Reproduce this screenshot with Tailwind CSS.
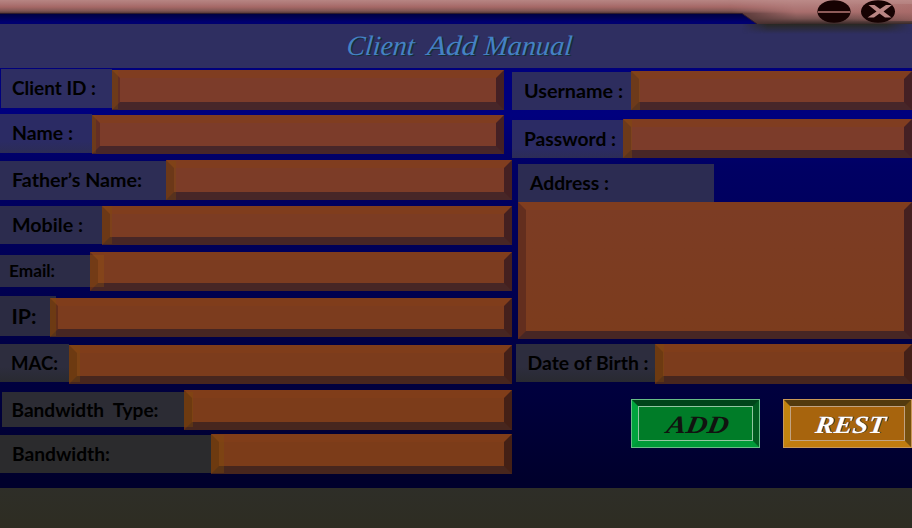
<!DOCTYPE html>
<html lang="en">
<head>
<meta charset="utf-8">
<title>Client Add Manual</title>
<script src="https://cdn.jsdelivr.net/npm/@tailwindcss/browser@4"></script>
</head>
<body class="w-[912px] h-[528px] overflow-hidden bg-[#000040] font-['Lato',sans-serif]">
<div class="flex flex-col w-[912px] h-[528px] bg-[linear-gradient(180deg,#00003c_13px,#000070_22px,#00007c_70px,#00007e_115px,#000064_165px,#00005a_240px,#000048_330px,#00003c_400px,#00002c_480px)]">
  <header class="relative h-[24px] shrink-0">
    <svg class="block" width="912" height="24" viewBox="0 0 912 24">
      <defs>
        <linearGradient id="bar" x1="0" y1="0" x2="0" y2="13.500" gradientUnits="userSpaceOnUse"><stop offset="0" stop-color="#b78583"/><stop offset=".3" stop-color="#ad7574"/><stop offset=".52" stop-color="#a56765"/><stop offset=".8" stop-color="#815654"/><stop offset="1" stop-color="#513434"/></linearGradient>
        <linearGradient id="tab" x1="0" y1="0" x2="0" y2="24" gradientUnits="userSpaceOnUse"><stop offset="0" stop-color="#bb8a88"/><stop offset=".5" stop-color="#a86e6d"/><stop offset=".78" stop-color="#795351"/><stop offset="1" stop-color="#382928"/></linearGradient>
        <linearGradient id="fade" x1="730" y1="8" x2="790" y2="-8" gradientUnits="userSpaceOnUse"><stop offset="0" stop-color="#fff" stop-opacity="0"/><stop offset="1" stop-color="#fff"/></linearGradient>
        <mask id="m"><rect x="700" y="0" width="212" height="24" fill="url(#fade)"/></mask>
        <linearGradient id="glow" x1="850" y1="0" x2="912" y2="0" gradientUnits="userSpaceOnUse"><stop offset="0" stop-color="#a86866" stop-opacity="0"/><stop offset="1" stop-color="#a86866" stop-opacity=".55"/></linearGradient>
      </defs>
      <path d="M0 0H912V24H757L742 13.500H0Z" fill="url(#bar)"/>
      <path d="M700 0H912V24H757L742 13.500H700Z" fill="url(#tab)" mask="url(#m)"/>
      <path d="M850 4H912V21H850Z" fill="url(#glow)"/>
      <path d="M0 13.500H742L757 24" fill="none" stroke="#301c2c"/>
      <ellipse cx="834" cy="11.500" rx="16.600" ry="11.300" fill="#160202"/>
      <path d="M818 12H850" stroke="#8e5b59" stroke-width="2"/>
      <ellipse cx="878" cy="11.500" rx="17" ry="11.300" fill="#160202"/>
      <path d="M868.500 5H874.500L880 9L886 5H892L883.500 11.400L891.500 17.500H885L879.500 13.600L874 17.500H867.500L876.500 11.400Z" fill="#b98583"/>
    </svg>
  </header>
  <div class="relative h-[44px] shrink-0 bg-[#2f2f61]">
    <div class="absolute left-[742px] right-0 top-0 h-[10px] bg-linear-to-b from-[#292822] to-[#2f2f61]/0 mask-l-from-85% mask-r-from-85%"></div>
    <svg class="relative block" width="912" height="44"><g font-family="Liberation Serif, serif" font-style="italic" font-size="28"><g fill="#172c35" transform="translate(1 .5)"><text transform="translate(346.500 31) skewX(-5)" textLength="68" lengthAdjust="spacingAndGlyphs">Client</text><text transform="translate(427 31) skewX(-5)" textLength="50" lengthAdjust="spacingAndGlyphs">Add</text><text transform="translate(484 31) skewX(-5)" textLength="88" lengthAdjust="spacingAndGlyphs">Manual</text></g><g fill="#4482c4"><text transform="translate(346 31) skewX(-5)" textLength="68" lengthAdjust="spacingAndGlyphs">Client</text><text transform="translate(426.500 31) skewX(-5)" textLength="50" lengthAdjust="spacingAndGlyphs">Add</text><text transform="translate(483.500 31) skewX(-5)" textLength="88" lengthAdjust="spacingAndGlyphs">Manual</text></g></g></svg>
  </div>
  <main class="flex h-[420px] shrink-0 items-start">
    <section class="w-[512px] pt-px font-bold text-[18.5px]">
      <div class="flex items-start pl-px pr-2">
        <div class="w-[111px] h-[39px] bg-[#2e2e62]"><svg class="block w-full h-full"><text x="11" y="26" textLength="84" lengthAdjust="spacingAndGlyphs">Client ID :</text></svg></div>
        <div class="relative mt-px grow h-[40px] border-8 border-t-[#803d20] border-r-[#442024] border-b-[#472629] border-l-[#632e24] bg-[#7c3c2a]"><i class="absolute -left-2 -top-2 w-[6px] h-[39px] bg-[#805008]/35"></i></div>
      </div>
      <div class="flex items-start mt-1 pr-2">
        <div class="w-[92px] h-[39px] bg-linear-to-b from-[#2b2b64] from-70% to-[#2c2c56]"><svg class="block w-full h-full"><text x="12" y="26" textLength="61" lengthAdjust="spacingAndGlyphs">Name :</text></svg></div>
        <div class="relative mt-px grow h-[39px] border-8 border-t-[#803d20] border-r-[#442024] border-b-[#472629] border-l-[#632e24] bg-[#7c3c2a]"><i class="absolute -left-2 -top-2 w-[4px] h-[38px] bg-[#805008]/35"></i></div>
      </div>
      <div class="flex items-start mt-1.5">
        <div class="mt-px w-[166px] h-[39px] bg-[#2d2d55]"><svg class="block w-full h-full"><text x="12" y="26" textLength="130" lengthAdjust="spacingAndGlyphs">Father’s Name:</text></svg></div>
        <div class="relative grow h-[40px] border-8 border-t-[#803d1f] border-r-[#442022] border-b-[#472627] border-l-[#632e20] bg-[#7c3c27]"><i class="absolute -left-2 -top-[7px] w-[10px] h-[39px] bg-[#805008]/30"></i></div>
      </div>
      <div class="flex items-start mt-1.5">
        <div class="w-[102px] h-[38px] bg-[#2c2c4e]"><svg class="block w-full h-full"><text x="12" y="26" textLength="71" lengthAdjust="spacingAndGlyphs">Mobile :</text></svg></div>
        <div class="relative grow h-[39px] border-8 border-t-[#803d1d] border-r-[#442020] border-b-[#472626] border-l-[#632e1e] bg-[#7c3c23]"><i class="absolute -left-2 -top-2 w-[10px] h-[38px] bg-[#805008]/30"></i></div>
      </div>
      <div class="flex items-start mt-[7px]">
        <div class="mt-[3px] w-[90px] h-[32px] bg-[#2c2c47]"><svg class="block w-full h-full"><text x="9" y="22" font-size="17" textLength="46" lengthAdjust="spacingAndGlyphs">Email:</text></svg></div>
        <div class="relative grow h-[39px] border-8 border-t-[#803d1c] border-r-[#44201f] border-b-[#472625] border-l-[#632e1a] bg-[#7c3c20]"><i class="absolute -left-2 -top-[5px] w-[14px] h-[32px] bg-[#985a0c]/30"></i></div>
      </div>
      <div class="flex items-start mt-[5px]">
        <div class="w-[50px] h-[40px] bg-[#2b2b42]"><svg class="block w-full h-full"><text x="11.500" y="28" font-size="21.500" textLength="25" lengthAdjust="spacingAndGlyphs">IP:</text></svg><i class="block -mt-10 ml-[50px] w-[6px] h-[2px] bg-[#2b2b42]"></i></div>
        <div class="relative mt-0.5 grow h-[39px] border-8 border-t-[#803d1b] border-r-[#44201c] border-b-[#472622] border-l-[#632e1a] bg-[#7c3c1e]"><i class="absolute -left-2 -top-2 w-[6px] h-[38px] bg-[#805008]/35"></i></div>
      </div>
      <div class="flex items-start mt-[7px]">
        <div class="w-[69px] h-[38px] bg-linear-to-b from-[#2d2d3e] from-60% to-[#292a31]"><svg class="block w-full h-full"><text x="11" y="26" textLength="47" lengthAdjust="spacingAndGlyphs">MAC:</text></svg></div>
        <div class="relative mt-px grow h-[39px] border-8 border-t-[#803d1a] border-r-[#442018] border-b-[#47261e] border-l-[#632e16] bg-[#7c3c1c]"><i class="absolute -left-2 -top-2 w-[11px] h-[37px] bg-[#805008]/35"></i></div>
      </div>
      <div class="flex items-start mt-1.5 pl-0.5">
        <div class="mt-0.5 w-[182px] h-[35px] bg-[#2c2c34]"><svg class="block w-full h-full"><text x="9.500" y="25" textLength="147" lengthAdjust="spacingAndGlyphs" xml:space="preserve">Bandwidth  Type:</text></svg></div>
        <div class="relative grow h-[40px] border-8 border-t-[#803d19] border-r-[#442016] border-b-[#47261e] border-l-[#632e14] bg-[#7c3c1a]"><i class="absolute -left-2 -top-[6px] w-[9px] h-[35px] bg-[#805008]/35"></i></div>
      </div>
      <div class="flex items-start mt-1">
        <div class="mt-px w-[211px] h-[38px] bg-[#2b2b2d]"><svg class="block w-full h-full"><text x="12" y="26" textLength="98" lengthAdjust="spacingAndGlyphs">Bandwidth:</text></svg></div>
        <div class="relative grow h-[40px] border-8 border-t-[#803d19] border-r-[#442015] border-b-[#47261d] border-l-[#632e14] bg-[#7c3c19]"><i class="absolute -left-2 -top-[7px] w-[13px] h-[38px] bg-[#805008]/35"></i></div>
      </div>
    </section>
    <section class="w-[400px] pt-[3px] font-bold text-[18.5px]">
      <div class="flex items-start">
        <div class="mt-px w-[119px] h-[38px] bg-[#2d2d5e]"><svg class="block w-full h-full"><text x="12" y="26" textLength="99" lengthAdjust="spacingAndGlyphs">Username :</text></svg></div>
        <div class="relative grow h-[39px] border-8 border-t-[#803d20] border-r-[#442024] border-b-[#472629] border-l-[#632e24] bg-[#7c3c29]"><i class="absolute -left-2 -top-[7px] w-[9px] h-[38px] bg-[#805008]/35"></i></div>
      </div>
      <div class="flex items-start mt-[9px]">
        <div class="mt-px w-[111px] h-[38px] bg-linear-to-b from-[#2b2b64] from-75% to-[#2c2c56]"><svg class="block w-full h-full"><text x="12" y="26" textLength="92" lengthAdjust="spacingAndGlyphs">Password :</text></svg></div>
        <div class="relative grow h-[39px] border-8 border-t-[#803d20] border-r-[#442024] border-b-[#472627] border-l-[#632e24] bg-[#7c3c2a]"><i class="absolute -left-2 -top-[7px] w-[9px] h-[38px] bg-[#805008]/35"></i></div>
      </div>
      <div class="mt-1.5 ml-1.5">
        <div class="w-[196px] h-[38px] bg-[#2c2c52]"><svg class="block w-full h-full"><text x="12" y="26" textLength="79" lengthAdjust="spacingAndGlyphs">Address :</text></svg></div>
        <div class="h-[137px] border-8 border-t-[#803d1e] border-r-[#442020] border-b-[#472624] border-l-[#632e1e] bg-linear-to-b from-[#7c3c24] to-[#7c3c1d]"></div>
      </div>
      <div class="flex items-start mt-[5px] ml-1">
        <div class="w-[139px] h-[38px] bg-linear-to-b from-[#2d2d3e] from-60% to-[#292a31]"><svg class="block w-full h-full"><text x="11.500" y="26" textLength="121" lengthAdjust="spacingAndGlyphs">Date of Birth :</text></svg></div>
        <div class="relative grow h-[40px] border-8 border-t-[#803d1a] border-r-[#442018] border-b-[#47261e] border-l-[#632e16] bg-[#7c3c1c]"><i class="absolute -left-2 -top-2 w-[9px] h-[38px] bg-[#805008]/35"></i></div>
      </div>
      <div class="flex mt-[15px] ml-[119px] gap-[23px]">
        <button class="w-[129px] h-[49px] border border-[#67bd86] bg-[#007c28]">
          <span class="block h-full border-[6px] border-t-[#00451a] border-r-[#005c20] border-b-[#009a38] border-l-[#00a43d]">
            <span class="block h-full border border-[#91c7a1]"><svg class="block w-full h-full"><text transform="translate(26.500 26) skewX(-10)" font-family="Liberation Serif, serif" font-style="italic" font-weight="bold" font-size="25" textLength="62" lengthAdjust="spacingAndGlyphs" fill="#10130f">ADD</text></svg></span>
          </span>
        </button>
        <button class="w-[129px] h-[49px] border border-[#c99856] bg-[#a7640d]">
          <span class="block h-full border-[6px] border-t-[#533a0e] border-r-[#76500e] border-b-[#c07c10] border-l-[#c2830f]">
            <span class="block h-full border border-[#c2a381]"><svg class="block w-full h-full"><g font-family="Liberation Serif, serif" font-style="italic" font-weight="bold" font-size="25"><text transform="translate(24.500 26) skewX(-8)" textLength="70" lengthAdjust="spacingAndGlyphs" fill="#182b50">REST</text><text transform="translate(23.500 26) skewX(-8)" textLength="70" lengthAdjust="spacingAndGlyphs" fill="#fff">REST</text></g></svg></span>
          </span>
        </button>
      </div>
    </section>
  </main>
  <footer class="h-[40px] shrink-0 bg-linear-to-b from-[#2e2e28] to-[#2e2d22]"></footer>
</div>
</body>
</html>
